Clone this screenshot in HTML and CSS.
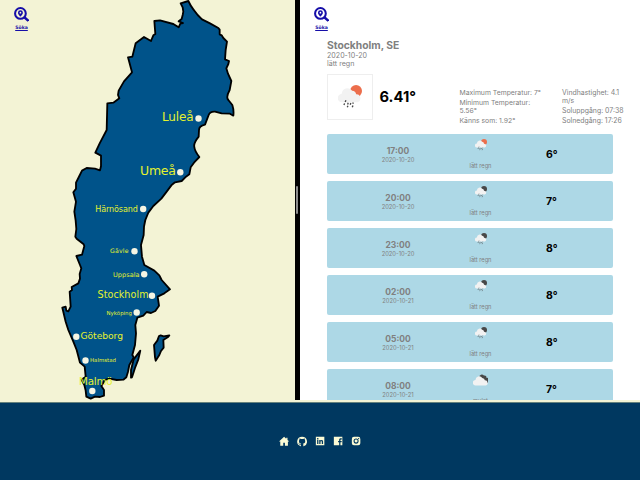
FILE: index.html
```
<!DOCTYPE html>
<html lang="sv">
<head>
<meta charset="utf-8">
<title>Väder</title>
<link rel="stylesheet" href="styles.css">
</head>
<body>
<svg width="0" height="0" class="defs">
  <defs>
    <g id="search"><circle cx="6" cy="6" r="5" fill="none" stroke="currentColor" stroke-width="1.9"/><path d="M9.6 9.6 13.5 13" fill="none" stroke="currentColor" stroke-width="2.3"/><path fill="currentColor" fill-rule="evenodd" d="M6 3a2.3 2.3 0 0 0-2.3 2.3C3.700 6.800 6 9 6 9s2.300-2.200 2.300-3.700A2.300 2.300 0 0 0 6 3zm0 1.500a.8.8 0 1 1 0 1.600.8.800 0 0 1 0-1.600z"/></g>
    <path id="cloud" d="M4 16.500a4 4 0 0 1-.4-8A5.500 5.500 0 0 1 13.600 5.500a4.200 4.200 0 0 1 3.800 3.400A3.900 3.900 0 0 1 18.800 16.500z" fill="#f2f2f2"/>
    <g id="drops" stroke="#484848" stroke-width="1.300"><path d="M7.600 14.700 6.900 16.400M6.300 17.600 5.700 19.200M9.800 17 9.200 18.600M9.500 19.800 8.900 21.300M12.300 17.300 11.700 19M14.600 16.700 14.200 17.900M14.300 19.600 13.700 21.300"/></g>
    <g id="sunrain"><circle cx="17.300" cy="5.800" r="5.700" fill="#ec6e4c"/><use href="#cloud"/><use href="#drops"/></g>
    <g id="nightrain"><circle cx="17.300" cy="5.800" r="5.700" fill="#484848"/><use href="#cloud"/><use href="#drops"/></g>
    <g id="clouds"><path d="M9 4.500a4 4 0 0 1 7-2.500 3.500 3.500 0 0 1 4 3.500 3.800 3.800 0 0 1 1.500 7.500H14z" fill="#484848"/><use href="#cloud"/></g>
  </defs>
</svg>
<main class="split">
  <section class="pane map-pane">
    <a class="search" href="#"><svg viewBox="0 0 14 14"><use href="#search"/></svg><span>Söka</span></a>
    <svg class="map" viewBox="0 0 294 400">
      <g class="land" transform="scale(.33333)">
        <path d="M542 10 565 3Q572 18 580 28L593 45 606 58 630 70 655 84 659 89 659 103 665 106 670 114 681 125 677 150 675 178 687 183 685 192 679 205 684 221 694 243 689 270Q677 292 685 300L697 315Q702 330 700 347L690 341 665 340 645 335Q630 334 626 345L615 374Q597 378 597 390L596 410Q580 430 583 441Q584 453 598 471L582 488 572 502 568 523 558 530 545 543 525 547 514 556 500 575 484 596 460 618 445 638Q434 660 432 680L431 705 423 735 426 770 433 795 463 812 478 826 485 840 510 868 493 880 473 890 477 917 466 933 453 939 440 936 430 947 412 953 406 975 408 1000 405 1035 397 1065 401 1072 388 1095 384 1115 379 1132 370 1139 350 1140 328 1136 315 1140 304 1158 312 1170 312 1187 300 1191 285 1190 272 1196 259 1190 257 1172 253 1155 244 1139 257 1130 254 1100 240 1088 230 1050 220 1025 205 990 197 965 187 923 197 920 199 932 205 934 212 920 209 875 216 870 215 861 235 850 240 836 239 822 244 805 240 795 229 768 246 764 253 738 251 733 230 716 226 710 229 687 227 662 223 635 228 605 220 577 228 566 228 548 238 528 246 512 260 504 285 506 300 511 303 499 303 467 286 458 299 430 320 390 322 310 340 308 358 295 354 285 356 272 372 244 396 217 384 172 397 170 407 130 432 111 453 123 460 106 466 102 463 63 480 61 520 72 536 82 541 71 549 69 536 64 545 57 548 45 550 35 548 22Z"/>
        <path d="M421 1052 415 1078 405 1104 396 1132 393 1133 393 1110 401 1078Z"/>
        <path d="M482 1006 491 1009 508 1006 503 1012 490 1020 491 1043 483 1053 478 1065 467 1082 465 1072 462 1035 472 1022 477 1008Z"/>
      </g>
      <g class="dots"><circle cx="198.500" cy="118.500" r="3.200"/><circle cx="180.300" cy="172.300" r="3.200"/><circle cx="143.200" cy="209" r="3.200"/><circle cx="134.500" cy="251.200" r="3.200"/><circle cx="144.200" cy="274.200" r="3.200"/><circle cx="152" cy="295.700" r="3.200"/><circle cx="136.700" cy="312.500" r="3.200"/><circle cx="76.300" cy="336.800" r="3.200"/><circle cx="85.500" cy="360.500" r="3.200"/><circle cx="92.300" cy="391" r="3.200"/></g>
      <g class="names">
        <text x="162" y="120.800" font-size="12" textLength="31.500">Luleå</text>
        <text x="140" y="175.300" font-size="12.500" textLength="36">Umeå</text>
        <text x="95.300" y="211.500" font-size="8" textLength="42.500">Härnösand</text>
        <text x="110" y="253" font-size="6.200" textLength="18.500">Gävle</text>
        <text x="113" y="276.500" font-size="6.500" textLength="26.500">Uppsala</text>
        <text x="97.500" y="298.300" font-size="9.600" textLength="51">Stockholm</text>
        <text x="106.500" y="315" font-size="5.400" textLength="25.500">Nyköping</text>
        <text x="80.500" y="339" font-size="9.200" textLength="42.500">Göteborg</text>
        <text x="90" y="362.300" font-size="5.400" textLength="26">Halmstad</text>
        <text x="79" y="384.500" font-size="10.300" textLength="33.500">Malmö</text>
      </g>
    </svg>
  </section>
  <div class="divider"><i></i></div>
  <section class="pane weather">
    <a class="search" href="#"><svg viewBox="0 0 14 14"><use href="#search"/></svg><span>Söka</span></a>
    <header>
      <h1>Stockholm, SE</h1>
      <p>2020-10-20</p>
      <p>lätt regn</p>
    </header>
    <div class="now">
      <div class="now-icon"><svg viewBox="0 0 23 23"><use href="#sunrain"/></svg></div>
      <strong>6.41°</strong>
      <div class="facts temps"><p>Maximum Temperatur: 7°</p><p>Minimum Temperatur:<br>5.56°</p><p>Känns som: 1.92°</p></div>
      <div class="facts"><p>Vindhastighet: 4.1<br>m/s</p><p>Soluppgång: 07:38</p><p>Solnedgång: 17:26</p></div>
    </div>
    <div class="list">
      <article><div class="time"><b>17:00</b><span>2020-10-20</span></div><div class="sky"><svg viewBox="0 0 23 23"><use href="#sunrain"/></svg><span>lätt regn</span></div><strong>6°</strong></article>
      <article><div class="time"><b>20:00</b><span>2020-10-20</span></div><div class="sky"><svg viewBox="0 0 23 23"><use href="#nightrain"/></svg><span>lätt regn</span></div><strong>7°</strong></article>
      <article><div class="time"><b>23:00</b><span>2020-10-20</span></div><div class="sky"><svg viewBox="0 0 23 23"><use href="#nightrain"/></svg><span>lätt regn</span></div><strong>8°</strong></article>
      <article><div class="time"><b>02:00</b><span>2020-10-21</span></div><div class="sky"><svg viewBox="0 0 23 23"><use href="#nightrain"/></svg><span>lätt regn</span></div><strong>8°</strong></article>
      <article><div class="time"><b>05:00</b><span>2020-10-21</span></div><div class="sky"><svg viewBox="0 0 23 23"><use href="#nightrain"/></svg><span>lätt regn</span></div><strong>8°</strong></article>
      <article><div class="time"><b>08:00</b><span>2020-10-21</span></div><div class="sky"><svg class="wide" viewBox="0 0 22 17"><use href="#clouds"/></svg><span>mulet</span></div><strong>7°</strong></article>
    </div>
  </section>
</main>
<footer>
  <svg viewBox="0 0 24 24"><path d="M12 2 0 13h3v10h7v-7h4v7h7V13h3l-4-3.700V4h-3v2.600z"/></svg>
  <svg viewBox="0 0 24 24"><path d="M12 1.500a11.500 11.500 0 0 0-3.700 22.400c.6.100.8-.2.800-.6v-2.200c-3.200.7-3.900-1.400-3.900-1.400-.5-1.300-1.300-1.700-1.300-1.700-1-.7.100-.7.100-.7 1.200.1 1.800 1.200 1.800 1.200 1 1.800 2.700 1.300 3.400 1 .1-.8.400-1.300.7-1.600-2.600-.3-5.300-1.300-5.300-5.700 0-1.300.5-2.300 1.200-3.100-.1-.3-.5-1.500.1-3.100 0 0 1-.3 3.200 1.200a11 11 0 0 1 5.800 0C17.100 5.700 18.100 6 18.100 6c.6 1.600.2 2.800.1 3.100.7.800 1.200 1.800 1.200 3.100 0 4.400-2.700 5.400-5.300 5.700.4.400.8 1.100.8 2.200v3.200c0 .4.200.7.800.6A11.500 11.500 0 0 0 12 1.500z"/></svg>
  <svg viewBox="0 0 24 24"><path fill-rule="evenodd" d="M2 2h20v20H2zM5 9.500V19h3V9.500zM5 5v3h3V5zm5 4.500V19h3v-5c0-3 3-3 3 0v5h3v-6c0-4-4.500-4.700-6-2.200V9.500z"/></svg>
  <svg viewBox="0 0 24 24"><path fill-rule="evenodd" d="M2 2h20v20h-4.500v-7.500h2.700l.4-3h-3.100V9.700c0-1 .3-1.500 1.500-1.500h1.800V5.500H18.500c-3 0-4 1.300-4 3.800v2.200H12v3h2.500V22H2z"/></svg>
  <svg viewBox="0 0 24 24"><path fill-rule="evenodd" d="M7 2h10a5 5 0 0 1 5 5v10a5 5 0 0 1-5 5H7a5 5 0 0 1-5-5V7a5 5 0 0 1 5-5zm5 4a6 6 0 1 0 0 12 6 6 0 0 0 0-12zm0 2.500a3.500 3.500 0 1 1 0 7 3.500 3.500 0 0 1 0-7zM18 4.500a1.500 1.500 0 1 0 0 3 1.500 1.500 0 0 0 0-3z"/></svg>
</footer>
</body>
</html>
```
FILE: styles.css
```
* { box-sizing: border-box; }
body { margin: 0; height: 480px; overflow: hidden; background: #f3f3d5; font-family: Inter, sans-serif; color: #808080; display: flex; flex-direction: column; }
p, h1 { margin: 0; }
.defs { position: absolute; }
.split { display: grid; grid-template-columns: 294.5px 5.500px 340px; height: 400px; flex: none; }
.pane { height: 400px; overflow: hidden; position: relative; }
.search { position: absolute; left: 14px; top: 7px; width: 15px; color: #150da8; font: bold 4.600px/6px "DejaVu Sans", sans-serif; display: flex; flex-direction: column; align-items: center; text-decoration: underline; }
.search svg { width: 15px; height: 15px; margin-bottom: 3px; }
.map { width: 294px; height: 400px; display: block; }
.land path { fill: #00538a; stroke: #000; stroke-width: 5.500; stroke-linejoin: round; }
.dots { fill: #f5f5e4; }
.names { fill: #e4f22f; font-family: "DejaVu Sans", sans-serif; }
.divider { background: #000; display: flex; align-items: center; justify-content: center; }
.divider i { width: 2px; height: 28px; background: #8c8c8c; border-radius: 1px; }
.weather { background: #fff; padding: 39px 0 0 27px; }
h1 { font-size: 10.300px; line-height: 12px; font-weight: 700; }
header p { font-size: 7.100px; line-height: 8px; }
header h1 { margin-bottom: 1px; }
.now { display: flex; height: 46px; margin-top: 6px; }
.now-icon { width: 46px; height: 46px; border: 1px solid #eee; display: flex; align-items: center; justify-content: center; }
.now-icon svg { width: 24px; height: 24px; }
.now > strong { width: 80px; margin-left: 6.500px; font-size: 14.700px; line-height: 47px; color: #000; }
.facts { padding-top: 15px; font-size: 6.830px; line-height: 8px; white-space: nowrap; }
.facts p { margin-bottom: 2px; }
.temps { width: 102.500px; }
.temps + .facts { font-size: 6.900px; }
.list { width: 286px; margin-top: 14px; display: flex; flex-direction: column; gap: 7px; }
article { height: 40.100px; flex: none; border-radius: 2px; background: #add8e6; display: grid; grid-template-columns: 142px 23px 1fr; align-items: center; }
.time { display: flex; flex-direction: column; align-items: center; font-size: 5.800px; line-height: 7px; }
.time b { font-size: 8.500px; line-height: 10px; }
.sky { display: flex; flex-direction: column; align-items: center; align-self: start; padding-top: 4.500px; font-size: 5.700px; line-height: 7px; white-space: nowrap; }
.sky svg { width: 12px; height: 12px; margin-bottom: 11.500px; }
.sky .wide { width: 15px; }
article > strong { padding-left: 54px; font-size: 10.500px; color: #000; }
footer { margin-top: 2px; height: 78px; border-top: 1px solid #65817c; background: #003860; display: flex; justify-content: center; align-items: center; gap: 7.800px; }
footer svg { width: 10.200px; height: 10.200px; fill: #fbfbd5; }
```
